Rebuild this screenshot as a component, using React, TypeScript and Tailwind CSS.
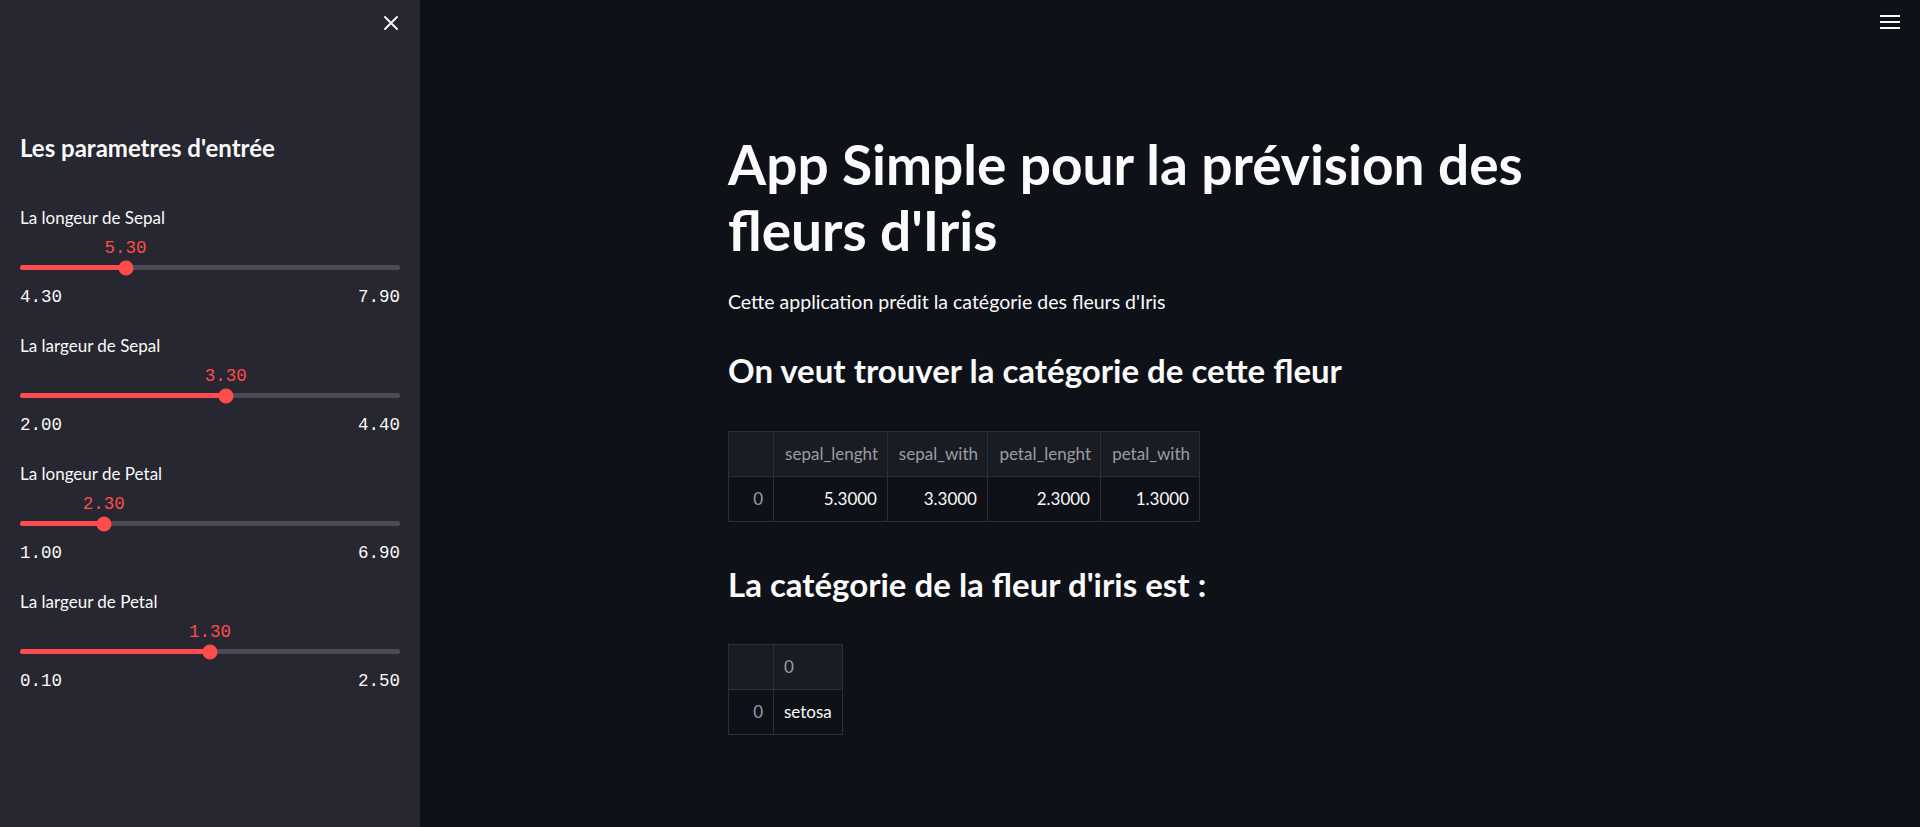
import React from "react";

const sans = "font-['Lato','Noto_Sans',sans-serif]";
const mono = "font-['Liberation_Mono','DejaVu_Sans_Mono',monospace]";

const sliders = [
  { label: "La longeur de Sepal", min: 4.3, max: 7.9, value: 5.3 },
  { label: "La largeur de Sepal", min: 2.0, max: 4.4, value: 3.3 },
  { label: "La longeur de Petal", min: 1.0, max: 6.9, value: 2.3 },
  { label: "La largeur de Petal", min: 0.1, max: 2.5, value: 1.3 },
];

const columns = [
  { name: "sepal_lenght", value: "5.3000", w: "w-[114px]" },
  { name: "sepal_with", value: "3.3000", w: "w-[100px]" },
  { name: "petal_lenght", value: "2.3000", w: "w-[113px]" },
  { name: "petal_with", value: "1.3000", w: "w-[99px]" },
];

function Slider({ label, min, max, value }: { label: string; min: number; max: number; value: number }) {
  const pct = ((value - min) / (max - min)) * 100;
  return (
    <div className="h-[128px]">
      <div className="h-[22px] text-[17px] leading-[22px] text-[#fafafa]">{label}</div>
      <div className="relative mt-[9px] h-[20px]">
        <span
          className={`absolute top-0 -translate-x-1/2 text-[17.5px] leading-[20px] text-[#ff4b4b] ${mono}`}
          style={{ left: `${pct}%` }}
        >
          {value.toFixed(2)}
        </span>
      </div>
      <div className="relative mt-[7px] h-[5px] rounded-full bg-[#4a4b55]">
        <div className="h-full rounded-full bg-[#ff4b4b]" style={{ width: `${pct}%` }} />
        <div
          className="absolute top-1/2 h-[15px] w-[15px] -translate-x-1/2 -translate-y-1/2 rounded-full bg-[#ff4b4b]"
          style={{ left: `${pct}%` }}
        />
      </div>
      <div className={`mt-[17px] flex justify-between text-[17.5px] leading-[20px] text-[#fafafa] ${mono}`}>
        <span>{min.toFixed(2)}</span>
        <span>{max.toFixed(2)}</span>
      </div>
    </div>
  );
}

export default function App() {
  return (
    <div className={`flex h-[827px] w-full overflow-hidden bg-[#0e1117] ${sans}`}>
      {/* Sidebar */}
      <aside className="w-[420px] shrink-0 bg-[#262730] px-[20px]">
        <div className="flex justify-end pt-[16px] pr-[2px]">
          <svg width="14" height="14" viewBox="0 0 14 14" className="text-[#fafafa]">
            <path d="M1 1L13 13M13 1L1 13" stroke="currentColor" strokeWidth="1.8" strokeLinecap="round" />
          </svg>
        </div>
        <h2 className="mt-[103px] text-[24px] leading-[30px] font-bold text-[#fafafa]">
          Les parametres d'entrée
        </h2>
        <div className="mt-[44px]">
          {sliders.map((s) => (
            <Slider key={s.label} {...s} />
          ))}
        </div>
      </aside>

      {/* Main */}
      <main className="relative flex-1">
        <div className="absolute right-[20px] top-[15px]">
          <svg width="20" height="14" viewBox="0 0 20 14">
            <rect x="0" y="0" width="20" height="2" fill="#fafafa" />
            <rect x="0" y="6" width="20" height="2" fill="#fafafa" />
            <rect x="0" y="12" width="20" height="2" fill="#fafafa" />
          </svg>
        </div>

        <div className="mx-auto w-[884px] pt-[131px] text-[#fafafa]">
          <h1 className="text-[55px] leading-[66px] font-bold">App Simple pour la prévision des fleurs d'Iris</h1>
          <p className="mt-[23px] text-[19.5px] leading-[32px]">Cette application prédit la catégorie des fleurs d'Iris</p>
          <h2 className="mt-[32px] text-[33px] leading-[40px] font-bold">
            On veut trouver la catégorie de cette fleur
          </h2>

          <table className="mt-[41px] table-fixed border-collapse text-[17px]">
            <thead>
              <tr className="h-[45px] bg-[#1a1c23]">
                <th className="w-[45px] border border-[#2c2f38]" />
                {columns.map((c) => (
                  <th
                    key={c.name}
                    className={`${c.w} whitespace-nowrap border border-[#2c2f38] px-[9px] text-right font-normal text-[#9a9ca3]`}
                  >
                    {c.name}
                  </th>
                ))}
              </tr>
            </thead>
            <tbody>
              <tr className="h-[45px]">
                <td className="border border-[#2c2f38] px-[10px] text-right text-[#9a9ca3]">0</td>
                {columns.map((c) => (
                  <td key={c.name} className="border border-[#2c2f38] px-[10px] text-right">
                    {c.value}
                  </td>
                ))}
              </tr>
            </tbody>
          </table>

          <h2 className="mt-[42px] text-[33px] leading-[40px] font-bold">La catégorie de la fleur d'iris est :</h2>

          <table className="mt-[40px] table-fixed border-collapse text-[17px]">
            <thead>
              <tr className="h-[45px] bg-[#1a1c23]">
                <th className="w-[45px] border border-[#2c2f38]" />
                <th className="w-[69px] border border-[#2c2f38] px-[10px] text-left font-normal text-[#9a9ca3]">0</th>
              </tr>
            </thead>
            <tbody>
              <tr className="h-[45px]">
                <td className="border border-[#2c2f38] px-[10px] text-right text-[#9a9ca3]">0</td>
                <td className="border border-[#2c2f38] px-[10px] text-left">setosa</td>
              </tr>
            </tbody>
          </table>
        </div>
      </main>
    </div>
  );
}
